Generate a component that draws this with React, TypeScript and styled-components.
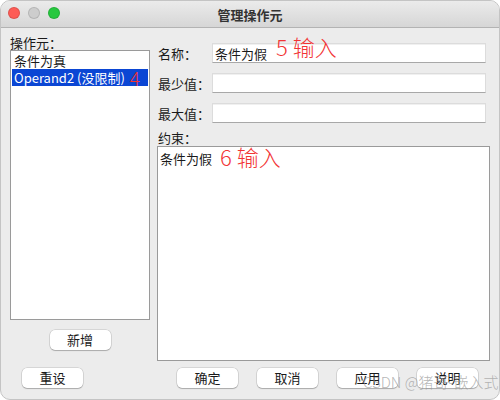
import React from 'react'
import styled, { createGlobalStyle } from 'styled-components'

const GlobalStyle = createGlobalStyle`
  html, body {
    margin: 0;
    padding: 0;
    background: #ffffff;
  }
  * {
    box-sizing: border-box;
  }
`

const Window = styled.div`
  position: relative;
  width: 500px;
  height: 400px;
  display: flex;
  flex-direction: column;
  background: #ececec;
  border: 1px solid #c4c4c4;
  border-radius: 10px;
  overflow: hidden;
  font-family: "Noto Sans CJK SC", "Noto Sans", sans-serif;
  font-size: 13px;
  color: #1a1a1a;
`

const TitleBar = styled.div`
  position: relative;
  height: 27px;
  flex: none;
  display: flex;
  align-items: center;
  justify-content: center;
  background: linear-gradient(#ebebeb, #d6d6d6);
  border-bottom: 1px solid #b3b3b3;
`

const Lights = styled.div`
  position: absolute;
  left: 7px;
  top: 6px;
  display: flex;
  gap: 8px;
`

const Light = styled.span<{ $color: string }>`
  width: 12px;
  height: 12px;
  border-radius: 50%;
  background: ${p => p.$color};
  border: 0.5px solid rgba(0, 0, 0, 0.12);
`

const Title = styled.div`
  font-weight: bold;
  font-size: 13px;
  color: #333;
`

const Main = styled.div`
  display: grid;
  grid-template-columns: 140px 1fr;
  column-gap: 7px;
  padding: 7px 9px 0 9px;
`

const LeftColumn = styled.div`
  display: flex;
  flex-direction: column;
  align-items: stretch;
`

const Label = styled.div`
  height: 15px;
  line-height: 15px;
  white-space: nowrap;
`

const ListBox = styled.div`
  height: 270px;
  background: #fff;
  border: 1px solid #9a9a9a;
  padding: 1px;
`

const ListItem = styled.div<{ $selected?: boolean }>`
  height: 17px;
  line-height: 17px;
  padding-left: 2px;
  white-space: nowrap;
  display: flex;
  align-items: center;
  gap: 5px;
  background: ${p => (p.$selected ? '#0b46d4' : 'transparent')};
  color: ${p => (p.$selected ? '#fff' : '#1a1a1a')};
`

// red hand-written markers laid over the form
const Note = styled.span<{ $size?: number; $lift?: number }>`
  color: #f23434;
  font-family: "Noto Sans CJK SC", sans-serif;
  font-weight: 300;
  font-size: ${p => p.$size ?? 22}px;
  line-height: 1;
  white-space: nowrap;
  transform: translateY(${p => -(p.$lift ?? 0)}px);
`

const Button = styled.button`
  width: 61px;
  height: 20px;
  padding: 0;
  background: #fff;
  border: none;
  border-radius: 5px;
  box-shadow: 0 0 0 0.5px rgba(0, 0, 0, 0.18), 0 1px 1px rgba(0, 0, 0, 0.2);
  font-family: "Noto Sans CJK SC", sans-serif;
  font-size: 13px;
  color: #1a1a1a;
  line-height: 20px;
`

const AddRow = styled.div`
  display: flex;
  justify-content: center;
  margin-top: 10px;
`

const RightColumn = styled.div`
  display: flex;
  flex-direction: column;
`

const FieldRow = styled.div`
  display: flex;
  align-items: center;
  height: 20px;
  margin-top: 10px;
  padding-right: 4px;

  &:first-child {
    margin-top: 8px;
  }
`

const FieldLabel = styled.div`
  width: 55px;
  flex: none;
  padding-left: 1px;
  white-space: nowrap;
`

const Field = styled.div`
  flex: 1;
  height: 20px;
  display: flex;
  align-items: center;
  gap: 9px;
  padding-left: 2px;
  background: #fff;
  border: 1px solid #dcdcdc;
  border-bottom-color: #a8a8a8;
  box-shadow: inset 0 1px 0 #f0f0f0;
`

const AreaLabel = styled(Label)`
  margin-top: 7px;
  padding-left: 1px;
`

const TextArea = styled.div`
  height: 215px;
  margin-top: 1px;
  padding: 2px 2px;
  background: #fff;
  border: 1px solid #9a9a9a;
  display: flex;
  align-items: flex-start;
  gap: 8px;
`

const Footer = styled.div`
  display: flex;
  align-items: center;
  padding: 7px 21px 0 21px;
  gap: 19px;
`

const Spacer = styled.div`
  flex: 1;
`

const Watermark = styled.div`
  position: absolute;
  left: 362px;
  top: 370px;
  font-family: "Noto Sans CJK SC", sans-serif;
  font-size: 15px;
  font-weight: 300;
  color: rgba(150, 150, 150, 0.7);
  white-space: nowrap;
  pointer-events: none;
`

function App() {
  return (
    <>
      <GlobalStyle />
      <Window>
        <TitleBar>
          <Lights>
            <Light $color="#fd5c56" />
            <Light $color="#cdcdcd" />
            <Light $color="#26c83e" />
          </Lights>
          <Title>管理操作元</Title>
        </TitleBar>

        <Main>
          <LeftColumn>
            <Label>操作元：</Label>
            <ListBox>
              <ListItem>条件为真</ListItem>
              <ListItem $selected>
                Operand2 (没限制)
                <Note $size={19}>4</Note>
              </ListItem>
            </ListBox>
            <AddRow>
              <Button>新增</Button>
            </AddRow>
          </LeftColumn>

          <RightColumn>
            <FieldRow>
              <FieldLabel>名称：</FieldLabel>
              <Field>
                条件为假
                <Note $lift={7}>5 输入</Note>
              </Field>
            </FieldRow>
            <FieldRow>
              <FieldLabel>最少值：</FieldLabel>
              <Field />
            </FieldRow>
            <FieldRow>
              <FieldLabel>最大值：</FieldLabel>
              <Field />
            </FieldRow>
            <AreaLabel>约束：</AreaLabel>
            <TextArea>
              条件为假
              <Note $lift={4}>6 输入</Note>
            </TextArea>
          </RightColumn>
        </Main>

        <Footer>
          <Button>重设</Button>
          <Spacer />
          <Button>确定</Button>
          <Button>取消</Button>
          <Button>应用</Button>
          <Button>说明</Button>
        </Footer>

        <Watermark>CSDN @猪哥-嵌入式</Watermark>
      </Window>
    </>
  )
}

export default App
